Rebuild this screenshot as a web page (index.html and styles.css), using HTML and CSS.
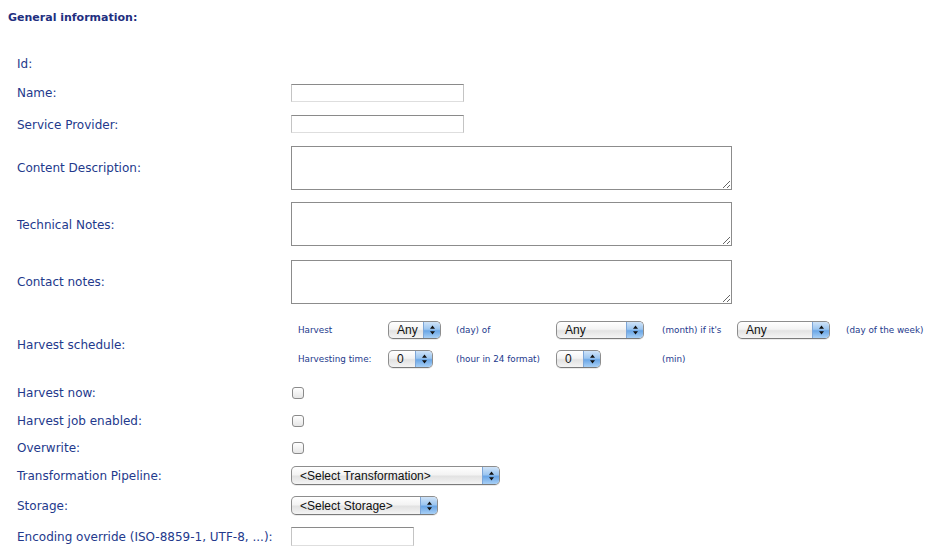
FILE: index.html
```html
<!DOCTYPE html>
<html>
<head>
<meta charset="utf-8">
<link rel="stylesheet" href="styles.css">
</head>
<body>
<h2 class="heading">General information:</h2>
<div class="form">
  <div class="label">Id:</div><div class="field"></div>

  <div class="label">Name:</div>
  <div class="field"><input class="text" type="text"></div>

  <div class="label">Service Provider:</div>
  <div class="field"><input class="text" type="text"></div>

  <div class="label">Content Description:</div>
  <div class="field"><textarea class="area"></textarea></div>

  <div class="label">Technical Notes:</div>
  <div class="field"><textarea class="area"></textarea></div>

  <div class="label">Contact notes:</div>
  <div class="field"><textarea class="area"></textarea></div>

  <div class="label">Harvest schedule:</div>
  <div class="field">
    <div class="schedule">
      <span class="small">Harvest</span>
      <div class="sel w-any"><span class="sel-text">Any</span><span class="sel-arrow"><svg width="7" height="10" viewBox="0 0 7 10"><path d="M3.5 0.5 L6 3.8 H1 Z M3.5 9.5 L6 6.2 H1 Z" fill="#111"/></svg></span></div>
      <span class="small">(day) of</span>
      <div class="sel w-month"><span class="sel-text">Any</span><span class="sel-arrow"><svg width="7" height="10" viewBox="0 0 7 10"><path d="M3.5 0.5 L6 3.8 H1 Z M3.5 9.5 L6 6.2 H1 Z" fill="#111"/></svg></span></div>
      <span class="small">(month) if it's</span>
      <div class="sel w-week"><span class="sel-text">Any</span><span class="sel-arrow"><svg width="7" height="10" viewBox="0 0 7 10"><path d="M3.5 0.5 L6 3.8 H1 Z M3.5 9.5 L6 6.2 H1 Z" fill="#111"/></svg></span></div>
      <span class="small">(day of the week)</span>

      <span class="small">Harvesting time:</span>
      <div class="sel w-num"><span class="sel-text">0</span><span class="sel-arrow"><svg width="7" height="10" viewBox="0 0 7 10"><path d="M3.5 0.5 L6 3.8 H1 Z M3.5 9.5 L6 6.2 H1 Z" fill="#111"/></svg></span></div>
      <span class="small">(hour in 24 format)</span>
      <div class="sel w-num"><span class="sel-text">0</span><span class="sel-arrow"><svg width="7" height="10" viewBox="0 0 7 10"><path d="M3.5 0.5 L6 3.8 H1 Z M3.5 9.5 L6 6.2 H1 Z" fill="#111"/></svg></span></div>
      <span class="small">(min)</span>
      <span></span><span></span>
    </div>
  </div>

  <div class="label">Harvest now:</div>
  <div class="field"><input class="check" type="checkbox"></div>

  <div class="label">Harvest job enabled:</div>
  <div class="field"><input class="check" type="checkbox"></div>

  <div class="label">Overwrite:</div>
  <div class="field"><input class="check" type="checkbox"></div>

  <div class="label">Transformation Pipeline:</div>
  <div class="field"><div class="sel big w-trans"><span class="sel-text">&lt;Select Transformation&gt;</span><span class="sel-arrow"><svg width="7" height="10" viewBox="0 0 7 10"><path d="M3.5 0.5 L6 3.8 H1 Z M3.5 9.5 L6 6.2 H1 Z" fill="#111"/></svg></span></div></div>

  <div class="label">Storage:</div>
  <div class="field"><div class="sel big w-storage"><span class="sel-text">&lt;Select Storage&gt;</span><span class="sel-arrow"><svg width="7" height="10" viewBox="0 0 7 10"><path d="M3.5 0.5 L6 3.8 H1 Z M3.5 9.5 L6 6.2 H1 Z" fill="#111"/></svg></span></div></div>

  <div class="label">Encoding override (ISO-8859-1, UTF-8, ...):</div>
  <div class="field"><input class="text short" type="text"></div>
</div>
</body>
</html>
```

FILE: styles.css
```css
html, body {
  margin: 0;
  padding: 0;
  background: #ffffff;
}
body {
  font-family: "DejaVu Sans", Verdana, sans-serif;
  font-size: 12px;
  color: #23398c;
}
.heading {
  margin: 0;
  padding: 11px 0 0 8px;
  height: 38px;
  box-sizing: border-box;
  font-size: 11px;
  font-weight: bold;
  color: #1f2f80;
  line-height: 13px;
}
.form {
  display: grid;
  margin-top: 11px;
  grid-template-columns: 274px 1fr;
  grid-template-rows: 28px 31px 32px 55px 58px 57px 68px 29px 27px 27px 29px 31px 31px;
  align-items: center;
  padding-left: 17px;
}
.label {
  line-height: 16px;
  padding-top: 1px;
  white-space: nowrap;
}
.field {
  display: flex;
  align-items: center;
}
.text {
  width: 173px;
  height: 18px;
  box-sizing: border-box;
  margin: 0;
  padding: 0;
  border: 1px solid #c4c4c4;
  border-top-color: #8a8a8a;
  border-bottom-color: #dedede;
  background: #fff;
}
.text.short {
  width: 123px;
  height: 19px;
}
.area {
  width: 441px;
  height: 44px;
  box-sizing: border-box;
  margin: 0;
  padding: 0;
  border: 1px solid #8c8c8c;
  background: #fff;
  resize: both;
}
.check {
  appearance: none;
  -webkit-appearance: none;
  width: 12px;
  height: 12px;
  margin: 0 0 0 1px;
  box-sizing: border-box;
  border: 1px solid #8a8a8a;
  border-radius: 3px;
  background: linear-gradient(#ffffff, #e6e6e6);
}
.schedule {
  display: grid;
  grid-template-columns: 90px 68px 100px 106px 75px 109px auto;
  grid-template-rows: 20px 20px;
  row-gap: 9px;
  align-items: center;
  padding-left: 7px;
}
.small {
  font-size: 8.8px;
  white-space: nowrap;
  color: #23398c;
}
.sel {
  display: flex;
  align-items: stretch;
  height: 18px;
  box-sizing: border-box;
  border: 1px solid #8d8d8d;
  border-bottom-color: #7a7a7a;
  border-radius: 5px;
  background: linear-gradient(#ffffff 0%, #f3f3f3 45%, #e2e2e2 55%, #f4f4f4 100%);
  overflow: hidden;
  box-shadow: 0 1px 0 rgba(0,0,0,0.08);
}
.sel-text {
  flex: 1;
  font-family: "Liberation Sans", Arial, sans-serif;
  font-size: 12px;
  color: #111;
  line-height: 17px;
  padding-left: 8px;
  white-space: nowrap;
}
.sel-arrow {
  width: 16px;
  display: flex;
  align-items: center;
  justify-content: center;
  border-left: 1px solid #7da6d8;
  background: linear-gradient(#cfe3f8 0%, #9cc6f0 45%, #6aa6e6 55%, #a8d0f6 100%);
}
.w-any { width: 53px; }
.w-month { width: 88px; }
.w-week { width: 93px; }
.w-num { width: 45px; }
.big { height: 19px; }
.big .sel-text { line-height: 18px; }
.w-trans { width: 209px; }
.w-storage { width: 147px; }
```
